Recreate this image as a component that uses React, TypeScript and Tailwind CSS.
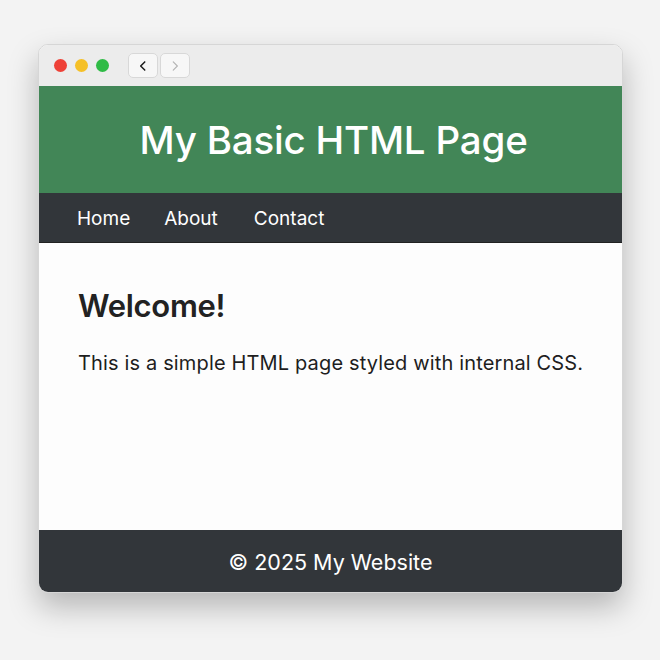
import React from "react";

const ChevronLeft = () => (
  <svg width="14" height="14" viewBox="0 0 24 24" fill="none" stroke="#1f1f1f" strokeWidth="2.6" strokeLinecap="round" strokeLinejoin="round">
    <path d="M15 5l-7 7 7 7" />
  </svg>
);

const ChevronRight = () => (
  <svg width="14" height="14" viewBox="0 0 24 24" fill="none" stroke="#b4b4b4" strokeWidth="2" strokeLinecap="round" strokeLinejoin="round">
    <path d="M9 5l7 7-7 7" />
  </svg>
);

export default function App() {
  return (
    <div className="w-[660px] h-[660px] bg-[#f3f3f3] pt-[44px] pl-[38px] font-['Inter',sans-serif]">
      <div className="w-[585px] h-[549px] rounded-[10px] overflow-hidden flex flex-col bg-white border border-[#d6d6d6] shadow-[0_14px_30px_rgba(0,0,0,0.25)]">
        {/* title bar */}
        <div className="h-[41px] bg-[#ececec] flex items-center pl-[15px] shrink-0">
          <div className="flex gap-[8px]">
            <span className="w-[13px] h-[13px] rounded-full bg-[#ee4137]" />
            <span className="w-[13px] h-[13px] rounded-full bg-[#f5c027]" />
            <span className="w-[13px] h-[13px] rounded-full bg-[#2fbb46]" />
          </div>
          <div className="flex gap-[2px] ml-[19px]">
            <button className="w-[30px] h-[25px] rounded-[5px] bg-[#f7f7f7] border border-[#d8d8d8] flex items-center justify-center">
              <ChevronLeft />
            </button>
            <button className="w-[30px] h-[25px] rounded-[5px] bg-[#f7f7f7] border border-[#d8d8d8] flex items-center justify-center">
              <ChevronRight />
            </button>
          </div>
        </div>

        {/* header */}
        <header className="h-[107px] bg-[#428657] flex items-center justify-center pt-[3px] pl-[6px] shrink-0">
          <h1 className="text-white text-[38.5px] font-medium tracking-[-0.2px]">My Basic HTML Page</h1>
        </header>

        {/* nav */}
        <nav className="h-[50px] bg-[#32363a] flex items-center pl-[38px] pt-[4px] gap-[34px] text-white text-[19px] shrink-0 border-b border-[#222]">
          <a>Home</a>
          <a>About</a>
          <a className="ml-[2px]">Contact</a>
        </nav>

        {/* content */}
        <main className="flex-1 bg-[#fdfdfd] pl-[39px] pr-[10px] pt-[40px]">
          <h2 className="text-[31px] font-semibold text-[#222] tracking-[-0.3px]">Welcome!</h2>
          <p className="mt-[18px] text-[20px] tracking-[0.15px] text-[#1e1e1e] whitespace-nowrap">This is a simple HTML page styled with internal CSS.</p>
        </main>

        {/* footer */}
        <footer className="h-[62px] bg-[#32363a] flex items-center justify-center pt-[2px] text-white text-[21.5px] shrink-0">
          © 2025 My Website
        </footer>
      </div>
    </div>
  );
}
